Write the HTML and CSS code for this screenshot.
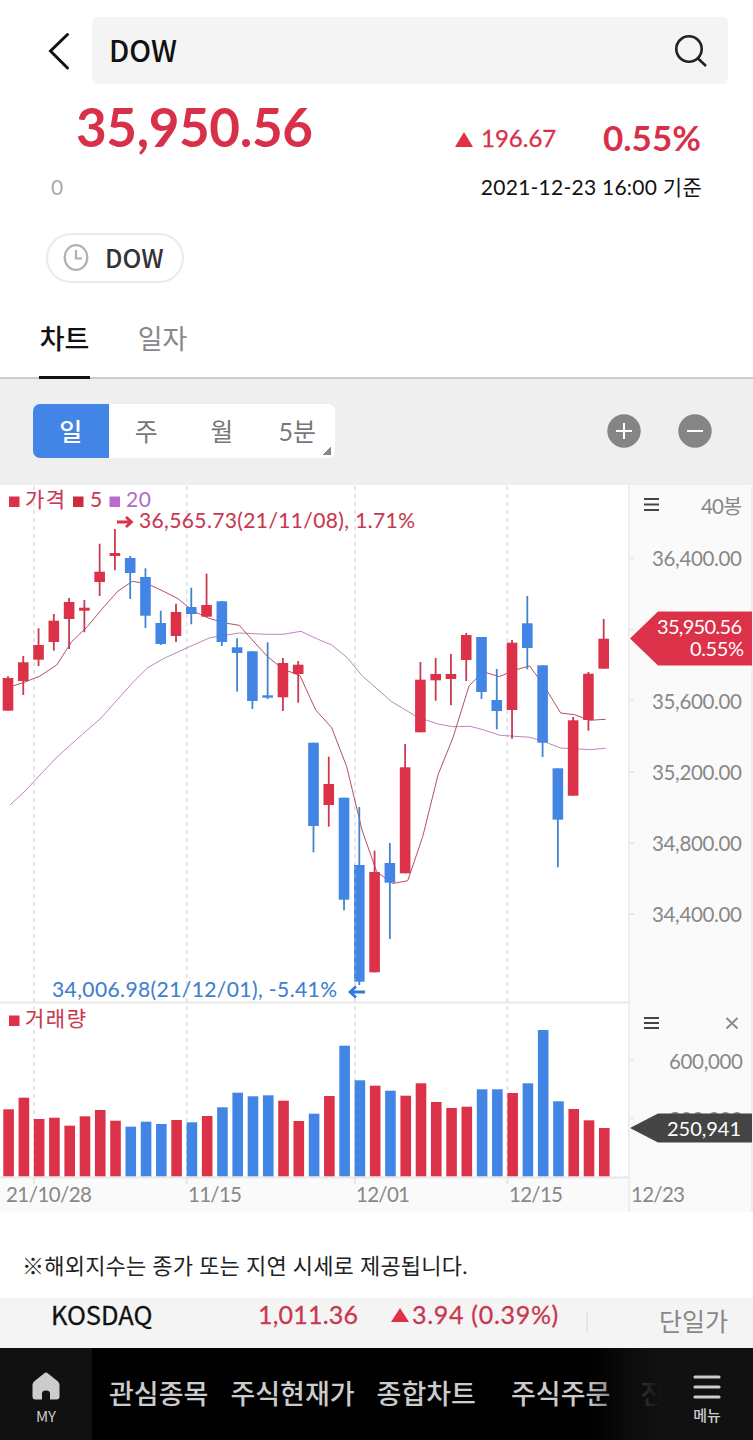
FILE: index.html
```html
<!DOCTYPE html>
<html lang="ko">
<head>
    <meta charset="UTF-8">
    <meta name="viewport" content="width=device-width, initial-scale=1.0">
    <title>DOW</title>
    <link rel="stylesheet" href="styles.css">
</head>
<body>
    <header class="header">
        <svg class="back" width="24" height="40" viewBox="0 0 24 40"><path d="M20.5 3.5 L3.5 20 L20.5 37"/></svg>
        <div class="search">
            <span>DOW</span>
            <svg width="36" height="36" viewBox="0 0 36 36"><circle cx="16" cy="16" r="12.7"/><path d="M25 25.5 L33 33"/></svg>
        </div>
    </header>

    <section class="quote">
        <div class="quote-main">
            <span class="price">35,950.56</span>
            <span class="diff"><i class="up"></i>196.67</span>
            <span class="rate">0.55%</span>
        </div>
        <div class="quote-sub">
            <span class="volume">0</span>
            <span class="time">2021-12-23 16:00 기준</span>
        </div>
    </section>

    <div class="recent">
        <button class="chip">
            <svg width="26" height="28" viewBox="0 0 26 28"><ellipse cx="13" cy="13.5" rx="11.3" ry="12.4"/><path d="M13 6 V14.5 H19"/></svg>
            <span>DOW</span>
        </button>
    </div>

    <nav class="tabs">
        <a class="tab active">차트</a>
        <a class="tab">일자</a>
    </nav>

    <div class="toolbar">
        <div class="periods">
            <button class="period active">일</button>
            <button class="period">주</button>
            <button class="period">월</button>
            <button class="period more">5분</button>
        </div>
        <div class="zoom">
            <svg width="34" height="34" viewBox="0 0 34 34"><circle cx="17" cy="17" r="16.7"/><path d="M9 17 H25 M17 9 V25"/></svg>
            <svg width="34" height="34" viewBox="0 0 34 34"><circle cx="17" cy="17" r="16.7"/><path d="M9 17 H25"/></svg>
        </div>
    </div>

    <div class="chart">
        <svg class="plot" width="628" height="727" viewBox="0 485 628 727">
            <rect class="date-bg" x="0" y="1177" width="628" height="35"/>
            <path class="grid" d="M34 486 V1176 M186.7 486 V1176 M355 486 V1176 M507.3 486 V1176"/>
            <path class="line" d="M0 1002.5 H628 M0 1177.5 H628 M34 1177 V1184 M186.7 1177 V1184 M355 1177 V1184 M507.3 1177 V1184"/>
            <g id="average"></g>
            <g id="candles"></g>
            <g id="volumes"></g>
            <path class="grid over" d="M355 866 V982"/>

            <rect class="red" x="9" y="496.5" width="10.5" height="10.5"/>
            <text class="t-red" x="25" y="507" textLength="40">가격</text>
            <rect class="red dark" x="73" y="496.5" width="10.5" height="10.5"/>
            <text class="t-red" x="90" y="507">5</text>
            <rect class="purple" x="109.5" y="496.5" width="10.5" height="10.5"/>
            <text class="t-purple" x="126" y="507" textLength="25">20</text>
            <path class="arrow-red" d="M117 522 H131 M126 517 L131.5 522 L126 527"/>
            <text class="t-red" x="139" y="528" textLength="276">36,565.73(21/11/08), 1.71%</text>
            <text class="t-blue" x="52" y="997" textLength="285">34,006.98(21/12/01), -5.41%</text>
            <path class="arrow-blue" d="M365 992 H350 M356 986.5 L350 992 L356 997.5"/>
            <rect class="red" x="9" y="1015.5" width="10.5" height="10.5"/>
            <text class="t-red" x="25" y="1026" textLength="61">거래량</text>

            <text x="6" y="1201.5" textLength="86">21/10/28</text>
            <text x="188" y="1201.5" textLength="54">11/15</text>
            <text x="356" y="1201.5" textLength="54">12/01</text>
            <text x="509" y="1201.5" textLength="54">12/15</text>
        </svg>
        <svg class="axis" width="125" height="727" viewBox="628 485 125 727">
            <path class="edge" d="M629 486 V1212 M752 486 V1212"/>
            <path class="line" d="M630 558.5 H634 M630 629.5 H634 M630 700.5 H634 M630 772 H634 M630 843 H634 M630 914 H634 M630 1060.5 H634 M630 1118.5 H634"/>
            <path class="menu" d="M644 499 H659 M644 504.5 H659 M644 510 H659"/>
            <text x="701" y="513.5" textLength="41">40봉</text>
            <text x="652" y="566" textLength="90">36,400.00</text>
            <text x="652" y="708.5" textLength="90">35,600.00</text>
            <text x="652" y="779.5" textLength="90">35,200.00</text>
            <text x="652" y="850.5" textLength="90">34,800.00</text>
            <text x="652" y="921.5" textLength="90">34,400.00</text>
            <path class="red" d="M630 638.5 L658 611.5 H752 V665.5 H658 Z"/>
            <text class="t-white" x="657" y="633.5" textLength="85">35,950.56</text>
            <text class="t-white" x="690" y="655.5" textLength="54">0.55%</text>
            <path class="menu" d="M644 1018 H659 M644 1023 H659 M644 1028 H659"/>
            <path class="close" d="M726.5 1018 L737.5 1028.5 M737.5 1018 L726.5 1028.5"/>
            <text x="669" y="1068.5" textLength="74">600,000</text>
            <text x="669" y="1126.5" textLength="74">300,000</text>
            <path class="tag" d="M630 1128 L658 1113.5 H752 V1142.5 H658 Z"/>
            <text class="t-white" x="667" y="1135.5" textLength="74">250,941</text>
            <text x="631" y="1201.5" textLength="54">12/23</text>
        </svg>
    </div>

    <p class="notice">※해외지수는 종가 또는 지연 시세로 제공됩니다.</p>

    <div class="ticker">
        <span class="ticker-name">KOSDAQ</span>
        <span class="ticker-price">1,011.36</span>
        <span class="ticker-diff"><i class="up"></i>3.94 (0.39%)</span>
        <span class="ticker-type">단일가</span>
    </div>

    <footer class="bottom">
        <a class="my">
            <svg width="28" height="28" viewBox="0 0 28 28"><path d="M14 0.5 Q15 0.5 16 1.5 L26 9.5 Q27.5 11 27.5 13 V24.5 Q27.5 27.5 24.5 27.5 H18 V21.5 Q18 18.5 14 18.5 Q10 18.5 10 21.5 V27.5 H3.5 Q0.5 27.5 0.5 24.5 V13 Q0.5 11 2 9.5 L12 1.5 Q13 0.5 14 0.5 Z"/></svg>
            <span>MY</span>
        </a>
        <div class="links">
            <a>관심종목</a>
            <a>주식현재가</a>
            <a class="wide">종합차트</a>
            <a class="last">주식주문</a>
            <a>진</a>
        </div>
        <a class="all">
            <svg width="28" height="24" viewBox="0 0 28 24"><path d="M2 2 H26 M2 12 H26 M2 22 H26"/></svg>
            <span>메뉴</span>
        </a>
    </footer>
    <script src="chart.js"></script>
</body>
</html>
```

FILE: styles.css
```css
* { box-sizing: border-box; }
body { margin: 0; width: 753px; height: 1440px; overflow: hidden; background: #fff; color: #111; font-family: Lato, "Noto Sans CJK KR", sans-serif; display: flex; flex-direction: column; }
button { border: 0; padding: 0; background: none; font: inherit; }
svg { display: block; flex: none; }

.header { display: flex; align-items: center; height: 84px; padding: 17px 25px 0 47px; }
.back { margin-right: 21px; fill: none; stroke: #111; stroke-width: 3; stroke-linecap: round; }
.search { flex: 1; height: 67px; padding: 0 19px 0 17px; display: flex; align-items: center; justify-content: space-between; background: #f4f4f4; border-radius: 6px; font: 500 29px "Noto Sans CJK KR", sans-serif; }
.search span { padding-bottom: 3px; }
.search svg { fill: none; stroke: #222; stroke-width: 2.6; }

.quote { height: 133px; padding: 0 51px; color: #d9304a; }
.quote-main { display: flex; align-items: baseline; height: 84px; padding-left: 25px; }
.price { width: 379px; font-size: 53px; font-weight: 700; line-height: 86px; letter-spacing: -0.4px; }
.diff { width: 148px; font-size: 24px; -webkit-text-stroke: 0.3px; }
.rate { font-size: 35px; font-weight: 700; white-space: nowrap; position: relative; top: 4px; }
.up { display: inline-block; margin-right: 8px; border: 9.5px solid transparent; border-top: 0; border-bottom: 15px solid #df3048; }
.quote-sub { display: flex; justify-content: space-between; font-size: 21px; line-height: 38px; }
.volume { color: #aaa; }
.time { color: #111; letter-spacing: 0.25px; }

.recent { height: 67px; padding: 16px 46px 0; }
.chip { display: flex; align-items: center; width: 138px; height: 50px; padding-left: 15px; border: 2px solid #ebebeb; border-radius: 25px; color: #333; font: 500 25px/36px "Noto Sans CJK KR", sans-serif; }
.chip span { padding-bottom: 3px; }
.chip svg { margin-right: 16px; fill: none; stroke: #b0b0b0; stroke-width: 2.2; }

.tabs { display: flex; gap: 47px; height: 95px; padding-left: 39px; border-bottom: 2px solid #ccc; }
.tab { height: 96px; padding-top: 35px; border-bottom: 4px solid transparent; color: #888; font-size: 27px; line-height: 40px; width: 51px; text-align: center; }
.tab.active { border-color: #111; color: #111; font-weight: 500; }

.toolbar { display: flex; justify-content: space-between; align-items: center; height: 106px; padding: 0 41px 2px 33px; background: #efefef; }
.periods { display: flex; width: 302px; height: 54px; border-radius: 7px; background: #fff; overflow: hidden; }
.period { flex: 1; padding-bottom: 3px; color: #777; font-size: 25px; }
.period.active { background: #4385e6; color: #fff; font-weight: 500; }
.period.more { background: linear-gradient(135deg, transparent 50%, #888 50%) right 4px bottom 3px / 9px 9px no-repeat; }
.zoom { display: flex; gap: 37px; }
.zoom circle { fill: #858585; }
.zoom path { stroke: #fff; stroke-width: 2; }

.chart { display: flex; height: 727px; }
.chart text { fill: #888; font-size: 20.5px; }
.plot .date-bg { fill: #fafafa; }
.axis { background: #fafafa; }
.grid { stroke: #e1e1e1; stroke-width: 1.7; stroke-dasharray: 4 4; fill: none; }
.grid.over { opacity: 0.3; }
.line { stroke: #e8e8e8; stroke-width: 2; }
.edge { stroke: #eee; stroke-width: 2; }
.red { fill: #db3149; stroke: none; }
.red.dark { fill: #cb2d3d; }
.blue { fill: #4385e4; }
.purple { fill: #bc6acb; }
.wick-red { stroke: #c93a50; stroke-width: 1.8; }
.wick-blue { stroke: #4383ca; stroke-width: 1.8; }
.ma5 { fill: none; stroke: #b4506a; stroke-width: 1; }
.ma20 { fill: none; stroke: #bb88bd; stroke-width: 1; }
.chart .t-red { fill: #c93850; stroke: #c93850; stroke-width: 0.1; font-size: 21px; }
.chart .t-purple { fill: #b06cc4; font-size: 21px; }
.chart .t-blue { fill: #3f80cc; stroke: #3f80cc; stroke-width: 0.1; font-size: 21px; }
.chart .t-white { fill: #fff; font-size: 20px; }
.arrow-red { fill: none; stroke: #db3149; stroke-width: 2.8; }
.arrow-blue { fill: none; stroke: #3577df; stroke-width: 2.8; }
.menu { stroke: #444; stroke-width: 1.8; }
.close { stroke: #888; stroke-width: 1.8; }
.tag { fill: #444; }

.notice { height: 86px; margin: 0; padding: 34px 22px 0; color: #222; font-size: 22px; line-height: 40px; letter-spacing: 0.22px; white-space: nowrap; }

.ticker { display: flex; height: 50px; padding-left: 51px; background: #f4f4f4; font-size: 25px; line-height: 33px; white-space: nowrap; color: #c93850; -webkit-text-stroke: 0.3px; }
.ticker-name { width: 207px; color: #111; font: 400 25.5px/32px "Noto Sans CJK KR", sans-serif; }
.ticker-price { width: 133px; letter-spacing: 0.2px; }
.ticker-diff { width: 195px; letter-spacing: 0.7px; }
.ticker-diff .up { position: relative; top: -2px; margin-right: 3px; border-left-width: 9px; border-right-width: 9px; border-bottom-width: 14px; }
.ticker-type { height: 21px; margin-top: 14px; padding-left: 71px; border-left: 2px solid #e6e6e6; color: #888; line-height: 18px; -webkit-text-stroke: 0; }

.bottom { display: flex; height: 92px; background: #000; color: #ccc; font-family: "Noto Sans CJK KR", sans-serif; }
.my, .all { display: flex; flex-direction: column; align-items: center; width: 92px; padding-top: 24px; background: #111; font-size: 15px; line-height: 32px; flex: none; }
.my svg { fill: #ccc; }
.all { font-weight: 500; }
.all svg { margin: 3px 0 0; stroke: #ccc; stroke-width: 3.2; stroke-linecap: round; }
.links { position: relative; flex: 1; display: flex; padding-left: 17px; overflow: hidden; font-size: 27px; font-weight: 500; line-height: 89px; white-space: nowrap; }
.links a { flex: none; margin-right: 22px; }
.links .wide { margin-right: 35px; }
.links .last { margin-right: 30px; }
.links::after { content: ""; position: absolute; top: 0; right: 0; width: 75px; height: 92px; background: linear-gradient(90deg, rgba(17,17,17,0), rgba(17,17,17,0.8) 70%, #111); }
```

FILE: chart.js
```js
// [color, body top, body bottom, high, low, volume top]
const days = [
    ['red', 678, 710.7, 676.3, 710.7, 1109.3],
    ['red', 662.3, 681, 656, 695, 1097.7],
    ['red', 645, 659.7, 628.3, 666, 1119],
    ['red', 620.7, 642, 614, 650.7, 1117.7],
    ['red', 602, 619, 598, 649, 1125.7],
    ['red', 607.7, 610.7, 600, 632.3, 1116.3],
    ['red', 571.7, 582, 543.7, 596, 1110],
    ['red', 553, 556, 529, 570.3, 1120.7],
    ['blue', 558, 573, 556, 599, 1126.7],
    ['blue', 577, 615.7, 568.3, 628, 1121.7],
    ['blue', 623, 644, 610.7, 645, 1124],
    ['red', 612, 636, 603.7, 642, 1120],
    ['blue', 607, 614, 587.7, 624.3, 1122.3],
    ['red', 605, 616.7, 573.7, 617, 1116],
    ['blue', 601.3, 642, 601, 646, 1107.3],
    ['blue', 647.3, 653, 638.3, 691.7, 1092.7],
    ['blue', 651.3, 701, 651, 709, 1096.3],
    ['blue', 695.3, 697.7, 642.3, 699, 1095.3],
    ['red', 663, 697.3, 658, 711, 1100.7],
    ['red', 664.7, 674, 661, 702.7, 1121],
    ['blue', 742.7, 826, 742.7, 852.3, 1113.7],
    ['red', 784, 805, 756.7, 826.7, 1096],
    ['blue', 797.7, 899.7, 797.7, 910.3, 1045.7],
    ['blue', 865, 981.7, 807, 985, 1080.3],
    ['red', 872, 972.3, 850.7, 972.3, 1085.7],
    ['blue', 863, 882.7, 843, 939, 1090.7],
    ['red', 767.3, 873.3, 744, 873.3, 1095.7],
    ['red', 679.7, 732.3, 662, 732.3, 1083.3],
    ['red', 674, 680.3, 658, 700.7, 1102],
    ['red', 674, 679, 654, 705.3, 1108],
    ['red', 635, 660, 633, 681, 1106.7],
    ['blue', 637, 692, 637, 699, 1089.3],
    ['blue', 700, 711, 669, 729.3, 1089.3],
    ['red', 642.7, 710, 640, 738.7, 1093],
    ['blue', 623.3, 648, 596, 669.3, 1083.3],
    ['blue', 665.3, 742.7, 665.3, 757, 1030],
    ['blue', 768.3, 819.7, 768.3, 867.3, 1101.3],
    ['red', 720.3, 795.7, 717, 795.7, 1109],
    ['red', 673.7, 720, 672, 730.7, 1120.3],
    ['red', 638.7, 668.7, 619, 668.7, 1128]
];

const ma5 = '10,687 25,682 40,676 56.7,665 71.7,641.7 87.3,626.7 102,609 117.3,591.7 132.3,581.3 148,584 163,591 178,598.7 193,611 209,618.3 225,623 239.3,625.3 255,643 268,657 283,669 300,675.7 315.7,710 331.7,727.7 346.7,766.7 362,830 376.7,871.7 392.7,883.5 407.7,880.7 422.7,836.7 438,775 453.3,736.7 469,686 483,671.7 499.3,676.7 515,670 529.7,666 545,687.3 560.7,713 574.7,714.7 590,720.3 605.7,719.3';
const ma20 = '10,805 25,791 40,775 56,758 76.7,739.3 100,719 133.3,682 147.7,667.7 163.3,658.7 193.3,645 210,637.7 239.3,633 266.7,634.3 283,634.3 301,631.3 316.7,638.7 331.7,645 347.3,657.7 361.7,675.3 391.7,701.7 415,715.7 425,719.7 438,724 453,726.7 470,726.3 483,729.7 500,735.3 530,737.3 545,742 560.7,748 590,749.7 605.7,748.3';

let candles = '';
let volumes = '';
days.forEach(([color, top, bottom, high, low, vol], i) => {
    const x = 8 + i * 15.274;
    candles += `<path class="wick-${color}" d="M${x} ${high} V${low}"/>
                <rect class="${color}" x="${x - 5.3}" y="${top}" width="10.6" height="${bottom - top}"/>`;
    volumes += `<rect class="${color}" x="${x - 4.7}" y="${vol}" width="10.6" height="${1176.3 - vol}"/>`;
});

document.getElementById('average').innerHTML = `<polyline class="ma20" points="${ma20}"/><polyline class="ma5" points="${ma5}"/>`;
document.getElementById('candles').innerHTML = candles;
document.getElementById('volumes').innerHTML = volumes;
```
